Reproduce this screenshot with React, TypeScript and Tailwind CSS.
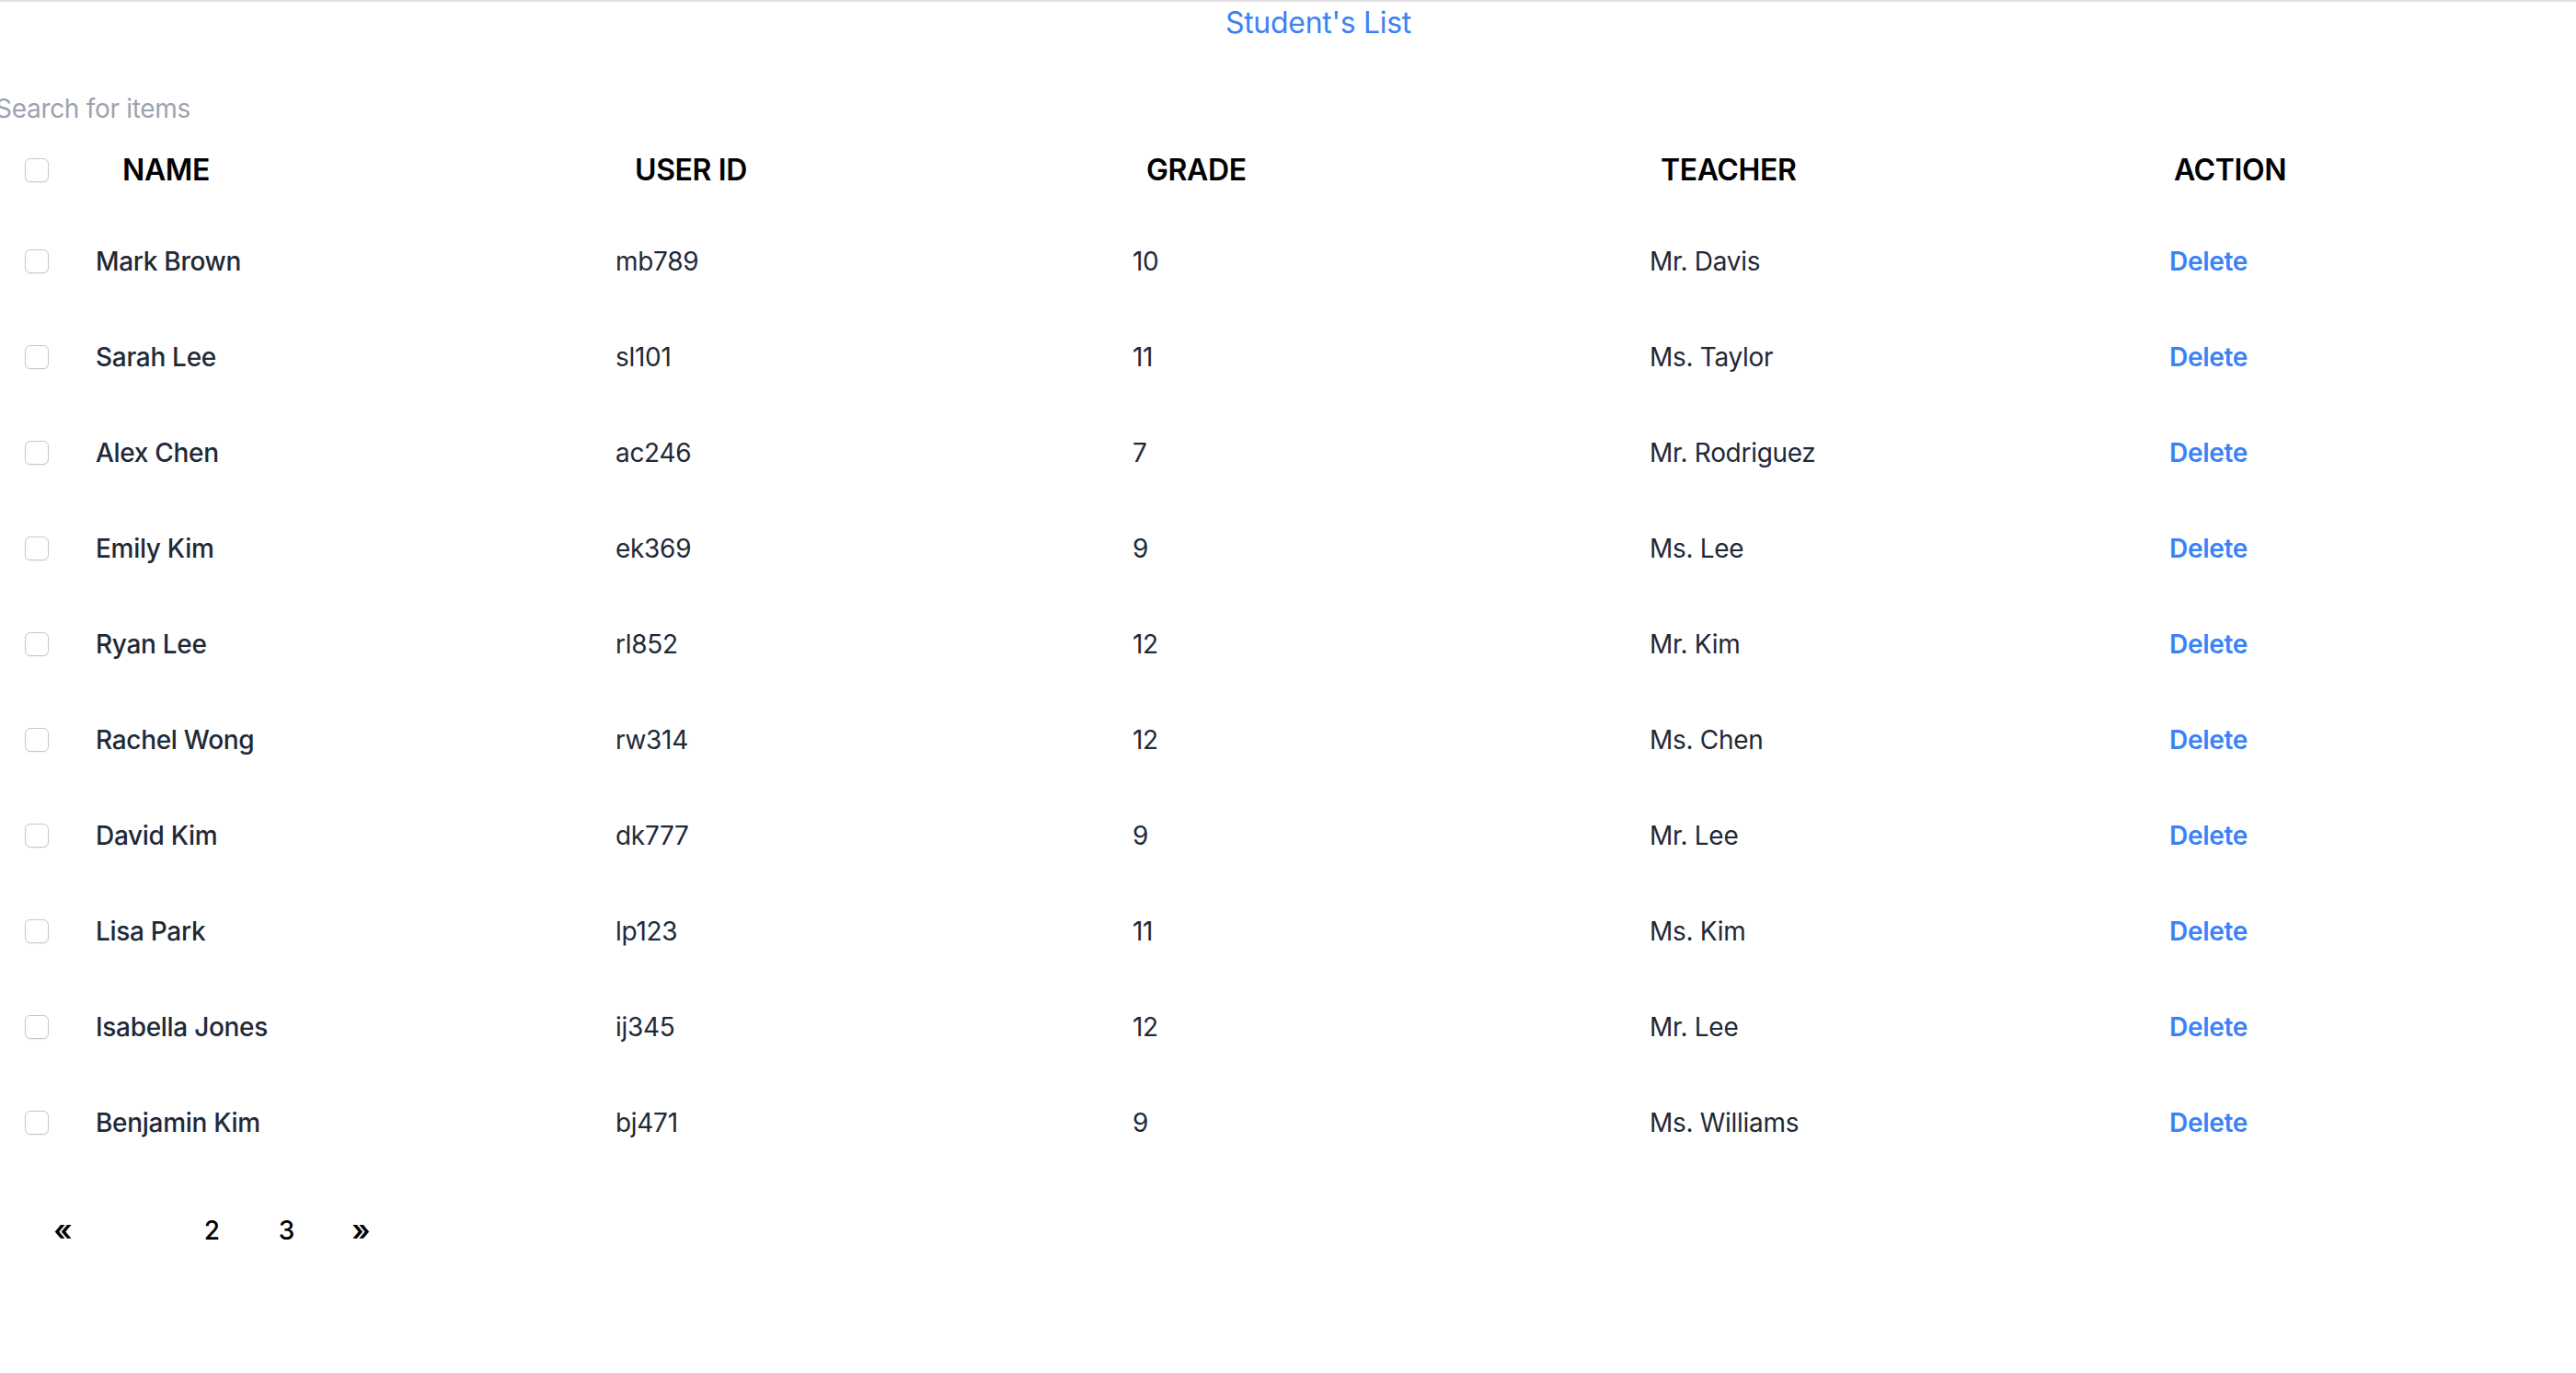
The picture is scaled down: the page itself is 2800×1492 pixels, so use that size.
import React from "react";

const students = [
  { name: "Mark Brown", id: "mb789", grade: "10", teacher: "Mr. Davis" },
  { name: "Sarah Lee", id: "sl101", grade: "11", teacher: "Ms. Taylor" },
  { name: "Alex Chen", id: "ac246", grade: "7", teacher: "Mr. Rodriguez" },
  { name: "Emily Kim", id: "ek369", grade: "9", teacher: "Ms. Lee" },
  { name: "Ryan Lee", id: "rl852", grade: "12", teacher: "Mr. Kim" },
  { name: "Rachel Wong", id: "rw314", grade: "12", teacher: "Ms. Chen" },
  { name: "David Kim", id: "dk777", grade: "9", teacher: "Mr. Lee" },
  { name: "Lisa Park", id: "lp123", grade: "11", teacher: "Ms. Kim" },
  { name: "Isabella Jones", id: "ij345", grade: "12", teacher: "Mr. Lee" },
  { name: "Benjamin Kim", id: "bj471", grade: "9", teacher: "Ms. Williams" },
];

function Box() {
  return (
    <input
      type="checkbox"
      className="ml-[27px] w-[26px] h-[26px] appearance-none rounded-[6px] border border-[#c8c8c8] bg-white shadow-[0_1px_1px_rgba(0,0,0,0.05)]"
    />
  );
}

export default function App() {
  return (
    <div className="w-full min-h-screen bg-white font-['Inter',sans-serif]">
      <div className="h-[2px] bg-[#e3e3e3]" />
      <div className="h-[46px] flex items-center justify-center pl-[66px]">
        <h1 className="text-[32px] leading-[40px] tracking-[-0.3px] text-[#3b82f6]">Student's List</h1>
      </div>
      <div className="h-[90px] flex items-end">
        <input
          type="text"
          placeholder="Search for items"
          className="ml-[-5px] h-[40px] w-[600px] text-[28px] leading-[40px] tracking-[-0.3px] outline-none placeholder:text-[#9ca3af] bg-transparent"
        />
      </div>
      <div className="grid grid-cols-[133px_557px_556px_559px_558px_1fr] h-[94px] items-center text-[32px] font-semibold tracking-[-0.4px] text-black">
        <div className="flex items-center">
          <Box />
        </div>
        <div>NAME</div>
        <div>USER ID</div>
        <div>GRADE</div>
        <div>TEACHER</div>
        <div>ACTION</div>
      </div>
      {students.map((s) => (
        <div
          key={s.id}
          className="grid grid-cols-[104px_565px_562px_562px_565px_1fr] h-[104px] items-center text-[28px] tracking-[-0.3px] text-[#1f2937]"
        >
          <div className="flex items-center">
            <Box />
          </div>
          <div className="font-medium">{s.name}</div>
          <div>{s.id}</div>
          <div>{s.grade}</div>
          <div>{s.teacher}</div>
          <div>
            <a className="font-semibold text-[#3b82f6] cursor-pointer">Delete</a>
          </div>
        </div>
      ))}
      <div className="h-[130px] flex items-center pl-[28px] text-[28px] font-semibold text-black">
        <span className="w-[81px] text-center text-[32px]">«</span>
        <span className="w-[81px] text-center text-white">1</span>
        <span className="w-[81px] text-center font-medium">2</span>
        <span className="w-[81px] text-center font-medium">3</span>
        <span className="w-[81px] text-center text-[32px]">»</span>
      </div>
    </div>
  );
}
